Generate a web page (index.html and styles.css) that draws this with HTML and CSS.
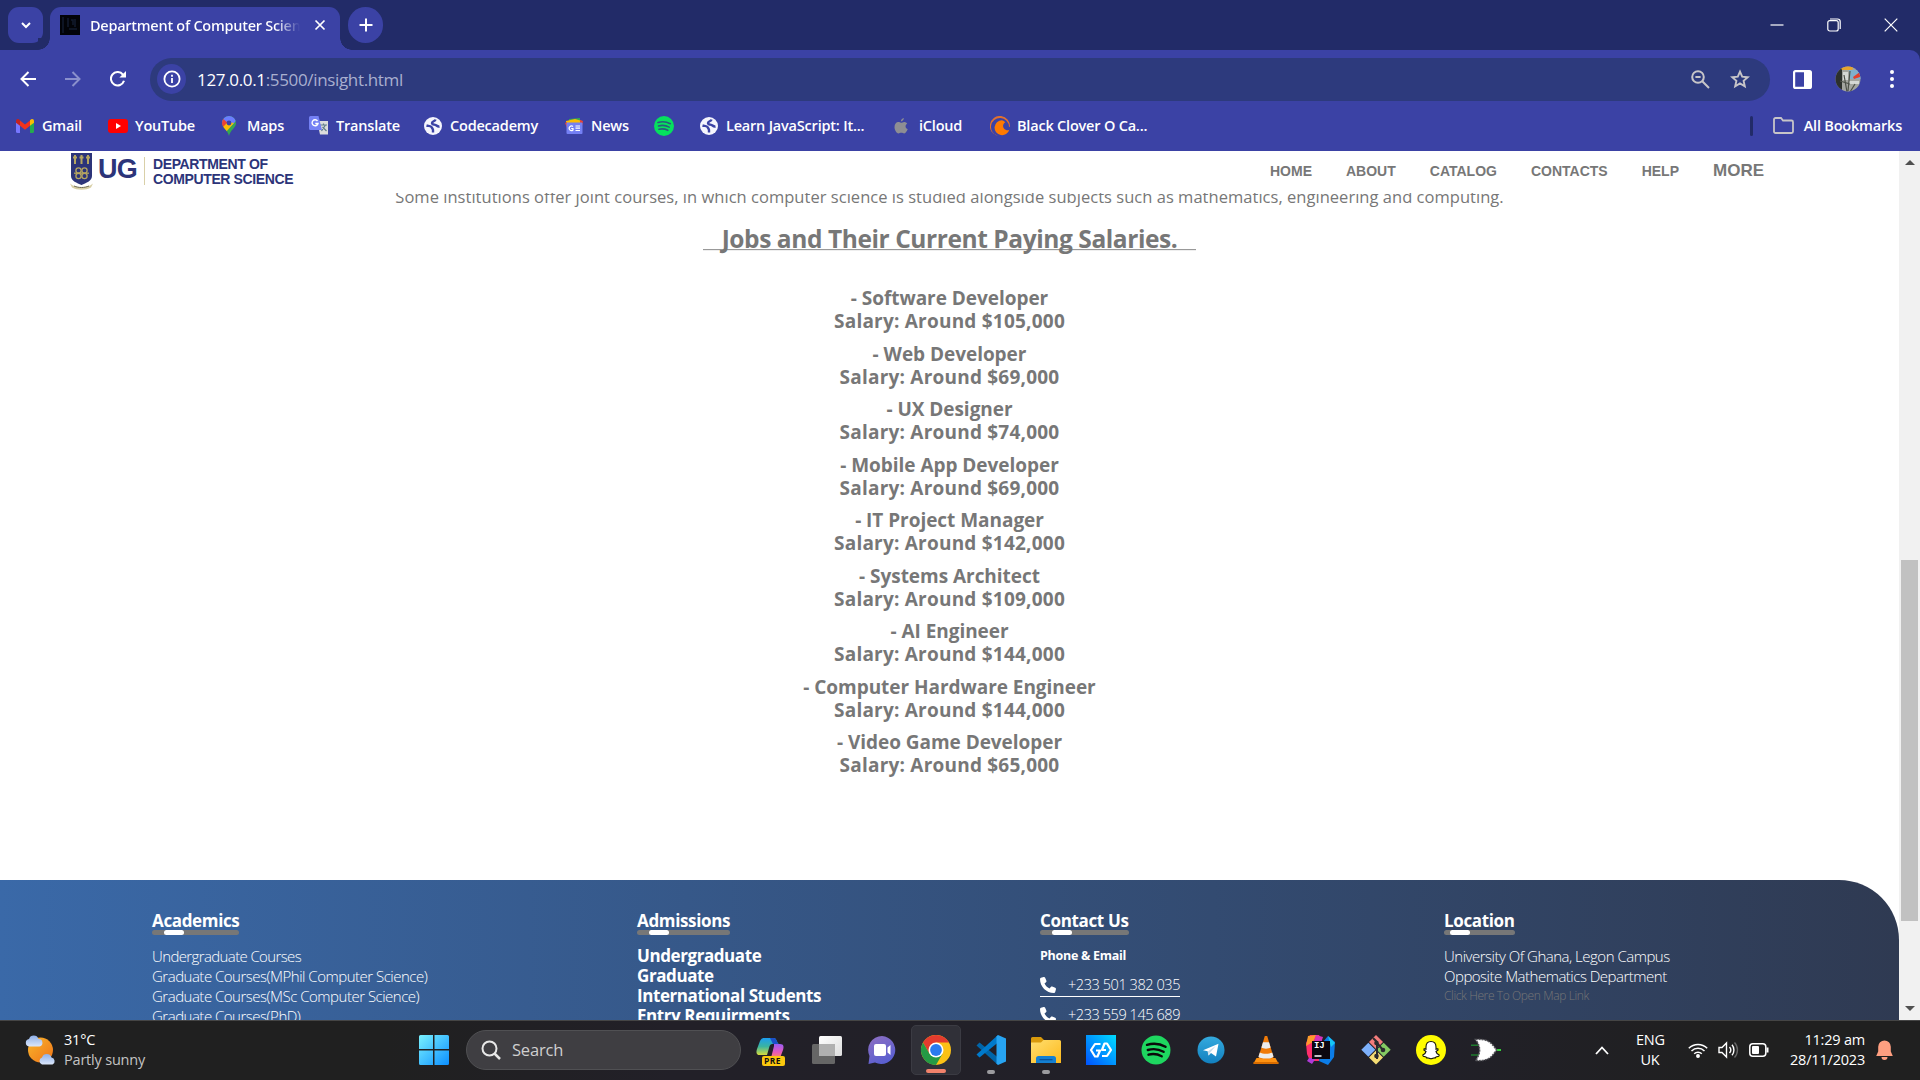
FILE: index.html
```html
<!DOCTYPE html>
<html lang="en">
<head>
<meta charset="utf-8">
<title>Department of Computer Science</title>
<link rel="stylesheet" href="styles.css">
</head>
<body>
<div class="screen">
  <div class="tabstrip">
    <div class="tab-menu"><svg width="12" height="12" viewBox="0 0 12 12"><path d="M2 4l4 4 4-4" fill="none" stroke="#fff" stroke-width="2"/></svg></div>
    <div class="tab">
      <svg class="favicon" width="20" height="20" viewBox="0 0 20 20"><path d="M0 0h20v20H0z" fill="#020308"/><path d="M3 2v16M8 3v9M9 14h8M11 5h2v5M15 4v8" stroke="#121b2e" stroke-width="1.5" fill="none"/></svg>
      <span class="tab-title">Department of Computer Scien</span>
      <svg class="tab-close" width="12" height="12" viewBox="0 0 12 12"><path d="M1.5 1.5l9 9m0-9l-9 9" stroke="#fff" stroke-width="1.7"/></svg>
    </div>
    <div class="tab-new"><svg width="14" height="14" viewBox="0 0 14 14"><path d="M7 .5v13M.5 7h13" stroke="#fff" stroke-width="2"/></svg></div>
    <div class="window-buttons">
      <svg width="14" height="14" viewBox="0 0 14 14"><path d="M.5 7h13" stroke="#fff" stroke-width="1.2"/></svg>
      <svg width="14" height="14" viewBox="0 0 14 14" fill="none" stroke="#fff" stroke-width="1.2"><rect x=".8" y="2.6" width="10.4" height="10.4" rx="2"/><path d="M3 1h7.5a2.7 2.7 0 0 1 2.700 2.700V11"/></svg>
      <svg width="14" height="14" viewBox="0 0 14 14"><path d="M.7.7l12.6 12.6m0-12.6L.7 13.3" stroke="#fff" stroke-width="1.2"/></svg>
    </div>
  </div>

  <div class="toolbar">
    <svg class="nav-icon" width="16" height="16" viewBox="0 0 16 16" fill="none" stroke="#fff" stroke-width="2"><path d="M16 8H2M8.5 1L1.5 8l7 7"/></svg>
    <svg class="nav-icon" width="16" height="16" viewBox="0 0 16 16" fill="none" stroke="#8a90cc" stroke-width="2"><path d="M0 8h14M7.5 1l7 7-7 7"/></svg>
    <svg class="nav-icon" width="16" height="16" viewBox="0 0 16 16"><path d="M14 9.8A6.7 6.7 0 1 1 12.9 3.6L14 5" fill="none" stroke="#fff" stroke-width="2.1"/><path d="M16 0v6.600H9.400z" fill="#fff"/></svg>
    <div class="omnibox">
      <span class="site-info"><svg width="18" height="18" viewBox="0 0 18 18"><circle cx="9" cy="9" r="7.6" fill="none" stroke="#fff" stroke-width="1.8"/><path d="M9 8v5M9 4.8v1.9" stroke="#fff" stroke-width="1.8"/></svg></span>
      <span class="url"><b>127.0.0.1</b>:5500/insight.html</span>
      <svg class="omni-zoom" width="19" height="19" viewBox="0 0 19 19" fill="none" stroke="#c7c5c8" stroke-width="2"><circle cx="7" cy="7" r="5.8"/><path d="M11.3 11.3l6.700 6.700M4.400 7h5.200"/></svg>
      <svg width="20" height="20" viewBox="0 0 20 20" fill="none" stroke="#c7c5c8" stroke-width="1.9"><path d="M10 2.6l2.200 5.100 5.600.5-4.200 3.700 1.200 5.400-4.800-2.900-4.800 2.900 1.200-5.400L2.200 8.200l5.600-.5z"/></svg>
    </div>
    <svg class="side-panel" width="19" height="19" viewBox="0 0 19 19"><rect x="1.1" y="1.1" width="16.8" height="16.8" rx="1.5" fill="none" stroke="#fff" stroke-width="2.2"/><path d="M11 1h7v17h-7z" fill="#fff"/></svg>
    <svg class="avatar" width="26" height="26" viewBox="0 0 26 26"><clipPath id="av"><circle cx="13" cy="13" r="12.5"/></clipPath><g clip-path="url(#av)"><path d="M0 0h26v26H0z" fill="#a3a59f"/><path d="M0 0h7v26H0z" fill="#2c302c"/><path d="M14 4h12v9H14z" fill="#7fb0cc"/><path d="M5 0h14l-2 4H7z" fill="#e6a52e"/><path d="M18 11l7-5v5l-6 2z" fill="#e2402c"/><path d="M8 6h5v8H8zM14 15h10v3H14z" fill="#d5d8d4"/><path d="M9 9l3 17M15 5l-2 20M20 18l-5 8M5 15l10 3" stroke="#4d5148" stroke-width="1.2"/></g></svg>
    <svg class="kebab" width="6" height="20" viewBox="0 0 6 20" fill="#fff"><circle cx="3" cy="3" r="2"/><circle cx="3" cy="10" r="2"/><circle cx="3" cy="17" r="2"/></svg>
  </div>

  <div class="bookmarks">
    <div class="bm"><svg width="20" height="16" viewBox="0 0 20 16"><path d="M1 3v10.500A1.500 1.500 0 0 0 2.500 15H5V6z" fill="#7777ff"/><path d="M19 3v10.500a1.500 1.500 0 0 1-1.500 1.500H15V6z" fill="#25a94f"/><path d="M5 2.500l5 4 5-4v5.300l-5 4-5-4z" fill="#f1321c"/><path d="M1 3.500C1 .6 3.300.5 5 2.200v5.600L1 4.800z" fill="#c5221f"/><path d="M19 3.500C19 .6 16.700.5 15 2.200v5.600l4-3z" fill="#fbbc04"/></svg><span>Gmail</span></div>
    <div class="bm"><svg width="20" height="14" viewBox="0 0 20 14"><rect width="20" height="14" rx="3" fill="#f00"/><path d="M8 4l5 3-5 3z" fill="#fff"/></svg><span>YouTube</span></div>
    <div class="bm maps"><svg width="14" height="20" viewBox="0 0 14 20"><clipPath id="pin"><path d="M7 0a7 7 0 0 1 7 7c0 5-5.500 6.500-7 13C5.500 13.500 0 12 0 7a7 7 0 0 1 7-7z"/></clipPath><g clip-path="url(#pin)"><path d="M0 0h14v20H0z" fill="#34a853"/><path d="M0 0h14v5L7 12 0 8z" fill="#6b7cff"/><path d="M0 2l6 5-6 6z" fill="#ea4335"/><path d="M6 6L0 12l4 4 8-9z" fill="#fbbc04"/></g><circle cx="7" cy="7" r="2.4" fill="#3b42a5"/></svg><span>Maps</span></div>
    <div class="bm"><svg width="20" height="19" viewBox="0 0 20 19"><path d="M8 5h11v13.500H11z" fill="#dcdcdc"/><path d="M11 9h7m-3.500-1.500V9m-2 6l4-6m-3 2l4 4" stroke="#607d8b" stroke-width="1.2" fill="none"/><path d="M1.500 0h8L13 14H1.500A1.500 1.500 0 0 1 0 12.500v-11A1.500 1.500 0 0 1 1.500 0z" fill="#7480f4"/><path d="M8.500 5A3 3 0 1 0 9 7.500H6.300" fill="none" stroke="#fff" stroke-width="1.4"/></svg><span>Translate</span></div>
    <div class="bm globe"><svg width="18" height="18" viewBox="0 0 18 18"><circle cx="9" cy="9" r="9" fill="#f5f5fd"/><path d="M2.500 8.500c2 .6 4.500.3 5.200 1.800.6 1.500 1.300 1.800 1.300 2.700v2.500M11.500 2.500C11 4.500 8 4 8 6s3 1.200 4.500 2.500 3 1 3 1" stroke="#3b42a5" stroke-width="2.4" fill="none"/></svg><span>Codecademy</span></div>
    <div class="bm"><svg width="19" height="16" viewBox="0 0 19 16"><path d="M4 1l11-1v6H4z" fill="#34a853"/><path d="M1 3l9-2 7 2v4H1z" fill="#fbbc04"/><path d="M15 2l3 1-1 5h-2zM0 5l2-1v6z" fill="#ea4335"/><rect x="1.500" y="4.500" width="16" height="11.500" rx="1" fill="#7480f4"/><path d="M8 8.500A2.300 2.300 0 1 0 8 12v-1.500H6.200M10.500 8h4.500M10.500 10.200h4.500M10.500 12.500h4.500" stroke="#fff" stroke-width="1.2" fill="none"/></svg><span>News</span></div>
    <div class="bm"><svg width="20" height="20" viewBox="0 0 20 20"><circle cx="10" cy="10" r="10" fill="#06e05e"/><path d="M4 6.500c4-1.200 8.500-.8 12.300 1.200M4.500 10c3.500-1 7.500-.6 10.700 1.100M5 13.300c3-.7 6.200-.4 8.800 1" stroke="#2a5b7c" stroke-width="1.600" fill="none" stroke-linecap="round"/></svg></div>
    <div class="bm globe"><svg width="18" height="18" viewBox="0 0 18 18"><circle cx="9" cy="9" r="9" fill="#f5f5fd"/><path d="M2.500 8.500c2 .6 4.500.3 5.200 1.800.6 1.500 1.300 1.800 1.300 2.700v2.500M11.500 2.500C11 4.500 8 4 8 6s3 1.200 4.500 2.500 3 1 3 1" stroke="#3b42a5" stroke-width="2.4" fill="none"/></svg><span>Learn JavaScript: It...</span></div>
    <div class="bm apple"><svg width="14" height="16" viewBox="0 0 14 16" fill="#8e8e93"><path d="M7 4.700C8 4.700 9 3.800 10.500 3.900c1.200.1 2.100.6 2.700 1.500-2.400 1.600-2 4.700.5 5.700-.6 1.800-2 4.300-3.500 4.300-1.100 0-1.600-.7-2.900-.7s-1.800.7-2.900.7C2.600 15.400.5 12 .5 9s1.700-5 3.800-5c1.100 0 2 .7 2.700.7zM9.800 0c.1 1.700-1.200 3.300-2.900 3.400C6.800 1.800 8.200.2 9.800 0z"/></svg><span>iCloud</span></div>
    <div class="bm"><svg width="20" height="20" viewBox="0 0 20 20"><path d="M19.800 11A10 10 0 1 0 8 19.800a9 9 0 1 1 11-9z" fill="#f47521" opacity=".9"/><path d="M12 4.200a7.500 7.500 0 1 0 7.300 9.500 3.600 3.600 0 1 1-4-7.400A7 7 0 0 0 12 4.200z" fill="#ff7a00"/></svg><span>Black Clover O Ca...</span></div>
    <div class="all-bm"><i class="bm-sep"></i><svg width="21" height="17" viewBox="0 0 21 17" fill="none" stroke="#c7c5c8" stroke-width="1.8"><path d="M1 14.500V2.500A1.500 1.500 0 0 1 2.500 1H8l2 2.500h8.500A1.500 1.500 0 0 1 20 5v9.500a1.500 1.500 0 0 1-1.500 1.500h-16A1.500 1.500 0 0 1 1 14.500z"/></svg><span>All Bookmarks</span></div>
  </div>

  <div class="viewport">
    <div class="page">
      <header class="site-header">
        <div class="logo">
          <svg width="25" height="38" viewBox="0 0 25 38"><path d="M2 1h21v23c0 5-6 7-10.500 9C8 31 2 29 2 24z" fill="#2c3479"/><path d="M6 3v9M12.500 3v9M19 3v9M4 5.500h4M10.500 5.500h4M17 5.500h4" stroke="#b5a560" stroke-width="2"/><g fill="none" stroke="#b5a560" stroke-width="1.3"><circle cx="9.500" cy="18.500" r="2.600"/><circle cx="15.500" cy="18.500" r="2.600"/><circle cx="9.500" cy="24" r="2.600"/><circle cx="15.500" cy="24" r="2.600"/><path d="M5 21.200h15"/></g><path d="M1 31.500c6 5.500 17 5.500 23 0l-2 4c-5 3-14 3-19 0z" fill="#d8cfa6"/><path d="M5 34c5 2 10 2 15 0" stroke="#6f6a50" fill="none"/></svg>
          <span class="ug">UG</span>
          <span class="dept">DEPARTMENT OF<br>COMPUTER SCIENCE</span>
        </div>
        <nav class="site-nav"><span>HOME</span><span>ABOUT</span><span>CATALOG</span><span>CONTACTS</span><span>HELP</span><span class="more">MORE</span></nav>
      </header>
      <main class="content">
        <p class="intro">Some institutions offer joint courses, in which computer science is studied alongside subjects such as mathematics, engineering and computing.</p>
        <h2>Jobs and Their Current Paying Salaries.</h2>
        <hr>
        <div class="jobs">
          <p>- Software Developer<br><span class="pay">Salary: Around $105,000</span></p>
          <p>- Web Developer<br><span class="pay">Salary: Around $69,000</span></p>
          <p>- UX Designer<br><span class="pay">Salary: Around $74,000</span></p>
          <p>- Mobile App Developer<br><span class="pay">Salary: Around $69,000</span></p>
          <p>- IT Project Manager<br><span class="pay">Salary: Around $142,000</span></p>
          <p>- Systems Architect<br><span class="pay">Salary: Around $109,000</span></p>
          <p>- AI Engineer<br><span class="pay">Salary: Around $144,000</span></p>
          <p>- Computer Hardware Engineer<br><span class="pay">Salary: Around $144,000</span></p>
          <p>- Video Game Developer<br><span class="pay">Salary: Around $65,000</span></p>
        </div>
      </main>
      <footer class="site-footer">
        <section>
          <h3>Academics</h3>
          <ul class="links"><li class="tight">Undergraduate Courses</li><li>Graduate Courses(MPhil Computer Science)</li><li>Graduate Courses(MSc Computer Science)</li><li>Graduate Courses(PhD)</li></ul>
        </section>
        <section>
          <h3>Admissions</h3>
          <ul class="links strong"><li>Undergraduate</li><li>Graduate</li><li>International Students</li><li>Entry Requirments</li></ul>
        </section>
        <section>
          <h3>Contact Us</h3>
          <h4>Phone &amp; Email</h4>
          <div class="phone"><svg width="16" height="16" viewBox="0 0 512 512" fill="#fff"><path d="M164.900 24.600c-7.700-18.600-28-28.500-47.400-23.200l-88 24C12.100 30.200 0 46 0 64c0 247.400 200.600 448 448 448 18 0 33.800-12.100 38.600-29.500l24-88c5.300-19.400-4.600-39.700-23.200-47.400l-96-40c-16.300-6.800-35.200-2.100-46.300 11.600L304.700 368C234.300 334.700 177.300 277.700 144 207.300l49.300-40.300c13.700-11.200 18.400-30 11.600-46.300z"/></svg><span>+233 501 382 035</span></div>
          <div class="phone"><svg width="16" height="16" viewBox="0 0 512 512" fill="#fff"><path d="M164.900 24.600c-7.700-18.600-28-28.500-47.400-23.200l-88 24C12.100 30.200 0 46 0 64c0 247.400 200.600 448 448 448 18 0 33.800-12.100 38.600-29.500l24-88c5.300-19.400-4.600-39.700-23.200-47.400l-96-40c-16.300-6.800-35.200-2.100-46.300 11.600L304.700 368C234.300 334.700 177.300 277.700 144 207.300l49.300-40.300c13.700-11.200 18.400-30 11.600-46.300z"/></svg><span>+233 559 145 689</span></div>
        </section>
        <section class="location">
          <h3>Location</h3>
          <ul class="links"><li>University Of Ghana, Legon Campus</li><li>Opposite Mathematics Department</li><li class="map-link">Click Here To Open Map Link</li></ul>
        </section>
      </footer>
    </div>
    <div class="scrollbar"><i class="arrow up"></i><i class="thumb"></i><i class="arrow down"></i></div>
  </div>

  <div class="taskbar">
    <div class="weather">
      <svg width="32" height="34" viewBox="0 0 32 34"><defs><linearGradient id="sun" x1="0" y1="0" x2="1" y2="1"><stop stop-color="#f8b62c"/><stop offset="1" stop-color="#f07418"/></linearGradient><linearGradient id="cl" x1="0" y1="0" x2="0" y2="1"><stop stop-color="#8fb0e8"/><stop offset="1" stop-color="#dbe7fb"/></linearGradient></defs><circle cx="15.500" cy="17" r="12.500" fill="url(#sun)"/><path d="M4 13.500a3.800 3.800 0 0 1 0-7.500 5 5 0 0 1 9.500 0 3.800 3.800 0 0 1 1 7.500z" fill="url(#cl)"/><path d="M17 31.500a3.700 3.700 0 0 1 0-7 5 5 0 0 1 9.500 0 3.700 3.700 0 0 1 1 7z" fill="url(#cl)"/></svg>
      <div class="weather-text">31°C<br><span class="dim">Partly sunny</span></div>
    </div>
    <svg class="start" width="30" height="30" viewBox="0 0 30 30"><defs><linearGradient id="win" x1="0" y1="0" x2="1" y2="1"><stop stop-color="#7af2fe"/><stop offset="1" stop-color="#0c8fff"/></linearGradient></defs><path d="M1.500 0H14v14H0V1.500A1.500 1.500 0 0 1 1.500 0zM15.500 0h13A1.500 1.500 0 0 1 30 1.500V14H15.500zM0 15.500h14V30H1.500A1.500 1.500 0 0 1 0 28.500zM15.500 15.500H30v13a1.500 1.500 0 0 1-1.500 1.500h-13z" fill="url(#win)"/></svg>
    <div class="search"><svg width="20" height="20" viewBox="0 0 20 20" fill="none" stroke="#e8e8e8" stroke-width="2"><circle cx="8.500" cy="8.500" r="7"/><path d="M13.500 13.500l5.500 5.500" stroke-width="2.500"/></svg><span>Search</span></div>
    <div class="apps">
      <div class="app"><svg width="32" height="32" viewBox="0 0 32 32"><defs><linearGradient id="c1" x1="0" y1="0" x2="0" y2="1"><stop stop-color="#1b9df0"/><stop offset=".5" stop-color="#3bb4a0"/><stop offset="1" stop-color="#d6dc3c"/></linearGradient><linearGradient id="c2" x1="0" y1="0" x2="0" y2="1"><stop stop-color="#9a5cf5"/><stop offset=".6" stop-color="#e85ab8"/><stop offset="1" stop-color="#ff8a5c"/></linearGradient></defs><path d="M9 4h10c3 0 3 6 5 6h-5c-3 0-4 0-5 4l-2 7H5c-4 0-4-3-3-6l3-8c1-2 2-3 4-3z" fill="url(#c1)"/><path d="M15 4h4c3 0 3 6 5 6h-6z" fill="#1b50c8"/><path d="M19 10h6c4 0 4 3 3 6l-3 8h-9l3-12z" fill="url(#c2)"/><rect x="7" y="22" width="23" height="10" rx="2" fill="#fbc80e"/></svg><span class="pre">PRE</span></div>
      <div class="app"><svg width="32" height="32" viewBox="0 0 32 32"><defs><linearGradient id="tv" x1="0" y1="0" x2="1" y2="1"><stop stop-color="#fff"/><stop offset="1" stop-color="#ddd"/></linearGradient></defs><rect x="9" y="2" width="23" height="20" rx="1.500" fill="url(#tv)"/><rect x="2" y="10" width="23" height="20" rx="1.500" fill="#666"/><path d="M9 10h16v12H9z" fill="#b0b0b0"/></svg></div>
      <div class="app"><svg width="32" height="32" viewBox="0 0 32 32"><defs><linearGradient id="mt" x1="0" y1="0" x2=".5" y2="1"><stop stop-color="#8f6fc2"/><stop offset="1" stop-color="#5a5fd0"/></linearGradient></defs><path d="M17 2a14 14 0 1 1-7 26.500L3.500 30 4.500 22A14 14 0 0 1 17 2z" fill="url(#mt)"/><rect x="9" y="10" width="12" height="12" rx="2" fill="#fff"/><path d="M22.500 13.500l3-2.500v10l-3-2.500z" fill="#fff"/></svg></div>
      <div class="app active"><svg width="32" height="32" viewBox="0 0 32 32"><circle cx="16" cy="16" r="15" fill="#fbc116"/><path d="M3 8.500A15 15 0 0 1 29 8.500H16L9.500 19.700z" fill="#e33b2e"/><path d="M3 8.500A15 15 0 0 0 16 31l6.500-11.300L16 22.500 9.500 19.700z" fill="#249a45"/><circle cx="16" cy="16" r="7.500" fill="#fff"/><circle cx="16" cy="16" r="5.900" fill="#2a7bef"/></svg><i class="run"></i></div>
      <div class="app"><svg width="32" height="32" viewBox="0 0 32 32"><path d="M1.500 11.500l3-3L23 23.500V31z" fill="#0065a9"/><path d="M1.500 20.500l3 3L23 8.500V1z" fill="#007acc"/><path d="M23 1l8 3.500v23L23 31l-1.500-1.500V2.500z" fill="#27a4f2"/></svg><i class="run idle"></i></div>
      <div class="app"><svg width="32" height="32" viewBox="0 0 32 32"><defs><linearGradient id="fo" x1="0" y1="0" x2="1" y2="1"><stop stop-color="#ffdf70"/><stop offset="1" stop-color="#fdb91c"/></linearGradient></defs><path d="M1 4.500A1.500 1.500 0 0 1 2.500 3H11l3 3h14v6H1z" fill="#d99a0c"/><path d="M1 8.500h10L13.500 6h16A1.500 1.500 0 0 1 31 7.500V29H1z" fill="url(#fo)"/><path d="M6 24.500A2.500 2.500 0 0 1 8.500 22h15a2.500 2.500 0 0 1 2.500 2.500V29H6z" fill="#1480d2"/><path d="M9.500 25.700h13" stroke="#0a4f96" stroke-width="1.200"/></svg><i class="run idle"></i></div>
      <div class="app"><svg width="32" height="32" viewBox="0 0 32 32"><defs><linearGradient id="gb" x1="0" y1="1" x2="1" y2="0"><stop stop-color="#0052ff"/><stop offset="1" stop-color="#00dcff"/></linearGradient></defs><path d="M1 1h30v30H1z" fill="url(#gb)"/><path d="M15.500 10H10L6 16l4 6.500h2.500L15 16.500h-4M17 22h5l4-6-4-6.500h-2.500L17 16h4" fill="none" stroke="#fff" stroke-width="2.200" stroke-linejoin="round"/></svg></div>
      <div class="app"><svg width="32" height="32" viewBox="0 0 32 32"><circle cx="16" cy="16" r="14.500" fill="#1ed760"/><path d="M7 10.800c6-1.800 13-1.200 18.500 2M7.800 16c5-1.500 11-.9 15.800 1.800M8.500 20.700c4.500-1.200 9-.7 13.200 1.600" stroke="#0a0a0a" stroke-width="2.400" fill="none" stroke-linecap="round"/></svg></div>
      <div class="app"><svg width="32" height="32" viewBox="0 0 32 32"><defs><linearGradient id="tg" x1="0" y1="0" x2="0" y2="1"><stop stop-color="#34aade"/><stop offset="1" stop-color="#1280bf"/></linearGradient></defs><circle cx="16" cy="16" r="13.500" fill="url(#tg)"/><path d="M8 16.200L23.500 9.800 21 22.500l-5-3.500-2.500 2.500-.8-4.200z" fill="#fff"/><path d="M12.700 17.500l8-5.500-5.700 6.700-1.500 2.800z" fill="#c8dcea"/></svg></div>
      <div class="app"><svg width="32" height="32" viewBox="0 0 32 32"><path d="M6.500 24h19l3 5.500h-25z" fill="#ff9210"/><path d="M3.500 28h25v2h-25z" fill="#d96d00"/><path d="M14.800 2h2.400l6.300 21c0 3-15 3-15 0z" fill="#f07a08"/><path d="M13 8.300h6l1.600 5.200c-2 1.500-7.200 1.500-9.200 0zM9.800 18.500c3 1.800 9.400 1.800 12.400 0l1.300 4c-1 2.800-14 2.800-15 0z" fill="#ececec"/></svg></div>
      <div class="app"><svg width="32" height="32" viewBox="0 0 32 32"><path d="M1 9l4-8h9l4 8-4 18H5l-3-7z" fill="#fe2d6b"/><path d="M3 2l8-1-3 7-7 4z" fill="#fc9b2c"/><path d="M18 8l5-6 7 6-1 15-6 8-9-4z" fill="#0c7de8"/><path d="M23 2l7 7-4 4z" fill="#16c7f5"/><path d="M11 1l7 2-2 6H9z" fill="#d533ba"/><path d="M2 27l5 3 4-6H4z" fill="#b03ad8"/><path d="M7 7h18v18H7z" fill="#0b0710"/><path d="M9.500 22h7" stroke="#fff" stroke-width="1.500"/></svg><span class="ij">IJ</span></div>
      <div class="app"><svg width="32" height="32" viewBox="0 0 32 32"><path d="M16 1l7 7-7 7-7-7z" fill="#f47c7c"/><path d="M8.300 8.700l7 7-7 7-7-7z" fill="#7db0fb"/><path d="M23.700 8.700l7 7-7 7-7-7z" fill="#85ca62"/><path d="M16 16.500l7 7-7 7-7-7z" fill="#f5dd74"/><path d="M13 4l4 4v17M17 9l6 7" stroke="#2b2b2e" stroke-width="2" fill="none"/><circle cx="16.500" cy="9" r="2.300" fill="#2b2b2e"/><circle cx="16.500" cy="22" r="2.300" fill="#2b2b2e"/><circle cx="23" cy="16" r="2.300" fill="#2b2b2e"/></svg></div>
      <div class="app"><svg width="32" height="32" viewBox="0 0 32 32"><circle cx="16" cy="16" r="15" fill="#fffc00"/><path d="M16 7.500c3.500 0 5 2.500 5 5.500v2.200l1.800-.5.300 1.300-2.100 1.500c.5 2 1.500 3 3.200 3.500l-.5 1.300-2.700.6-.8 1.100c-1.700-.5-2.500.8-4.200.8s-2.500-1.300-4.200-.8l-.8-1.100-2.700-.6-.5-1.300c1.700-.5 2.700-1.500 3.200-3.500l-2.100-1.500.3-1.300 1.800.5V13c0-3 1.500-5.500 5-5.500z" fill="#fff" stroke="#15150a" stroke-width="1.100"/></svg></div>
      <div class="app"><svg width="32" height="32" viewBox="0 0 32 32"><path d="M1 11.200h9M1 21h9" stroke="#1f7a2e" stroke-width="1.500"/><path d="M25 16h6" stroke="#35d13c" stroke-width="2"/><path d="M5.500 5.500c13-1 16 3.500 21 10.500-5 7-8 11.500-21 10.500 5.500-7 5.500-14 0-21z" fill="#fff" stroke="#55555a" stroke-width="1.500" stroke-dasharray="2 1"/></svg></div>
    </div>
    <div class="tray">
      <svg class="chev" width="14" height="9" viewBox="0 0 14 9"><path d="M1 8l6-6.500L13 8" fill="none" stroke="#fff" stroke-width="1.800"/></svg>
      <div class="lang">ENG<br>UK</div>
      <svg class="wifi" width="20" height="16" viewBox="0 0 20 16" fill="none" stroke="#fff" stroke-width="1.500"><path d="M.8 6.200a13 13 0 0 1 18.400 0M3.500 9a9.200 9.200 0 0 1 13 0M6.200 11.800a5.400 5.400 0 0 1 7.600 0"/><circle cx="10" cy="14" r="1.200" fill="#fff"/></svg>
      <svg class="vol" width="21" height="18" viewBox="0 0 21 18" fill="none" stroke="#fff" stroke-width="1.400"><path d="M1 6.500h3l4.500-4.500v14L4 11.500H1z"/><path d="M11.500 6a4.500 4.500 0 0 1 0 6M14 3.800a8 8 0 0 1 0 10.400"/><path d="M16.500 1.500a11 11 0 0 1 0 15" stroke="#666"/></svg>
      <svg class="batt" width="20" height="14" viewBox="0 0 20 14"><rect x=".8" y=".8" width="16" height="12.400" rx="3" fill="none" stroke="#fff" stroke-width="1.500"/><rect x="3" y="3" width="7" height="8" rx="1" fill="#fff"/><path d="M18.500 4.500v5" stroke="#fff" stroke-width="2"/></svg>
      <div class="clock">11:29 am<br>28/11/2023</div>
      <svg class="bell" width="17" height="20" viewBox="0 0 17 20"><path d="M8.500.500a6.300 6.300 0 0 1 6.300 6.300v4.700l2 4.500H.2l2-4.500V6.800A6.300 6.300 0 0 1 8.500.500zM5.500 17h6a3 3 0 0 1-6 0z" fill="#ff9f80"/></svg>
    </div>
  </div>
</div>
</body>
</html>
```
FILE: styles.css
```css
* { box-sizing: border-box; }
body { margin: 0; font-family: "Open Sans", "Noto Sans", sans-serif; }
svg { display: block; flex: none; }
h2, h3, h4, p, ul { margin: 0; padding: 0; }
.screen { width: 1920px; height: 1080px; display: flex; flex-direction: column; overflow: hidden; background: #fff; }

/* tab strip */
.tabstrip { height: 50px; background: #222b68; display: flex; padding: 7px 22px 0 8px; flex: none; }
.tab-menu { width: 35px; height: 36px; border-radius: 11px; background: #3b42a5; display: grid; place-items: center; }
.tab { position: relative; margin-left: 7px; width: 290px; height: 43px; border-radius: 11px 11px 0 0; background: #3b42a5; display: flex; align-items: center; padding: 0 14px 7px 10px; }
.tab::before, .tab::after { content: ""; position: absolute; bottom: 0; width: 12px; height: 12px; }
.tab::before { right: 100%; background: radial-gradient(circle at 0 0, #222b68 11.5px, #3b42a5 12px); }
.tab::after { left: 100%; background: radial-gradient(circle at 100% 0, #222b68 11.5px, #3b42a5 12px); }
.tab-title { margin: 2px 0 0 10px; width: 210px; overflow: hidden; white-space: nowrap; font-size: 14.5px; font-weight: 600; letter-spacing: -.27px; line-height: 20px; background: linear-gradient(90deg, #fff 185px, #3b42a5 210px); background-clip: text; -webkit-background-clip: text; color: transparent; }
.tab-close { margin-left: auto; }
.tab-new { margin-left: 8px; width: 35px; height: 36px; border-radius: 18px; background: #3b42a5; display: grid; place-items: center; }
.window-buttons { margin-left: auto; display: flex; gap: 43px; align-items: center; height: 35px; }

/* toolbar */
.toolbar { height: 58px; flex: none; background: #3b42a5; display: flex; align-items: center; padding: 0 25px 0 20px; border-radius: 0 10px 0 0; box-shadow: 0 -10px 0 0 #222b68; clip-path: inset(0); }
.nav-icon { margin-right: 29px; }
.omnibox { width: 1620px; height: 43px; margin-left: -5px; border-radius: 22px; background: #2d3a7d; display: flex; align-items: center; padding: 0 20px 0 7px; flex: none; }
.site-info { width: 29px; height: 30px; border-radius: 50%; background: #3b42a5; display: grid; place-items: center; }
.url { margin-left: 11px; font-size: 17px; letter-spacing: -.34px; color: #a9afcf; white-space: nowrap; }
.url b { font-weight: 400; color: #fff; }
.omni-zoom { margin-left: auto; margin-right: 20px; }
.side-panel { margin-left: 23px; }
.avatar { margin-left: 23px; }
.kebab { margin-left: auto; }

/* bookmarks bar */
.bookmarks { height: 43px; flex: none; background: #3b42a5; display: grid; grid-template-columns: 93px 114px 87px 115px 141px 89px 46px 194px 96px 1fr auto; padding: 0 18px 8px 15px; align-items: center; color: #fff; font-size: 14.5px; font-weight: 600; letter-spacing: -.2px; white-space: nowrap; }
.bm { display: flex; align-items: center; gap: 7px; }
.bm.maps { gap: 11px; }
.bm.globe { gap: 8px; }
.bm.apple { gap: 11px; }
.all-bm { display: flex; align-items: center; }
.bm-sep { width: 3px; height: 20px; background: #222b68; margin-right: 20px; border-radius: 2px; }
.all-bm span { margin-left: 10px; }

/* page */
.viewport { flex: 1; display: flex; min-height: 0; }
.page { width: 1899px; display: flex; flex-direction: column; overflow: hidden; }
.site-header { height: 42px; flex: none; display: flex; justify-content: space-between; padding: 0 135px 0 69px; background: #fff; }
.logo { display: flex; font-family: "Liberation Sans", sans-serif; font-weight: 700; color: #2c3479; }
.logo svg { margin-top: 1px; }
.ug { margin-left: 4px; font-size: 27px; letter-spacing: -.8px; line-height: 36px; width: 46px; height: 28px; }
.dept { border-left: 1px solid #d9d0a8; height: 28px; margin-top: 6px; padding-left: 8px; font-size: 14px; letter-spacing: -.38px; line-height: 15px; white-space: nowrap; }
.site-nav { display: flex; gap: 34px; align-items: baseline; padding-top: 10px; font: 700 14px/20px "Liberation Sans", sans-serif; color: #777; }
.site-nav .more { font-size: 17px; }
.content { height: 687px; overflow: hidden; text-align: center; color: #777; flex: none; }
.intro { margin-top: -8px; font-size: 16.5px; letter-spacing: .03px; line-height: 24px; font-weight: 500; white-space: nowrap; }
h2 { margin-top: 13px; font-size: 24.5px; letter-spacing: -.42px; line-height: 34px; font-weight: 700; }
hr { width: 493px; margin: -7px auto 0; border: 0; border-top: 1px solid #999; border-bottom: 1px solid #eee; }
.jobs { margin-top: 36px; font-size: 19px; letter-spacing: -.04px; line-height: 23px; font-weight: 700; }
.jobs p { margin-bottom: 9.5px; }
.pay { letter-spacing: .22px; }

/* footer */
.site-footer { flex: 1; min-height: 0; overflow: hidden; border-radius: 0 60px 0 0; background: linear-gradient(90deg, #3a69a8, #2f3a52); color: #fff; display: grid; grid-template-columns: 485px 403px 404px 1fr; padding: 30px 0 0 152px; align-items: start; }
h3 { position: relative; width: max-content; font-size: 17px; letter-spacing: -.35px; line-height: 22px; font-weight: 700; padding-bottom: 3px; white-space: nowrap; }
h3::before { content: ""; position: absolute; left: 0; bottom: 0; width: 100%; height: 5px; border-radius: 3px; background: #777; }
h3::after { content: ""; position: absolute; left: 12px; bottom: 0; width: 20px; height: 5px; border-radius: 3px; background: #fff; }
.location h3::after { left: 6px; }
.links { list-style: none; margin-top: 11px; font-size: 15px; letter-spacing: -.5px; line-height: 20px; font-weight: 300; white-space: nowrap; }
.links .tight { letter-spacing: -.62px; }
.links.strong { font-size: 17px; letter-spacing: -.42px; font-weight: 700; }
.links .map-link { font-size: 12px; letter-spacing: -.39px; color: #777; }
h4 { margin-top: 11px; font-size: 12.5px; letter-spacing: -.28px; line-height: 20px; font-weight: 700; }
.phone { width: 140px; height: 24px; margin-top: 7px; display: flex; align-items: center; justify-content: space-between; border-bottom: 1px solid #fff; font-size: 14.5px; letter-spacing: -.43px; font-weight: 300; white-space: nowrap; }
.phone + .phone { margin-top: 6px; }

/* scrollbar */
.scrollbar { width: 21px; background: #f1f1f1; display: flex; flex-direction: column; align-items: center; padding: 9px 0; }
.arrow { border: 5px solid transparent; width: 0; height: 0; }
.up { border-bottom-color: #505050; border-top: 0; }
.down { border-top-color: #505050; border-bottom: 0; margin-top: auto; }
.thumb { width: 17px; height: 361px; background: #c1c1c1; margin-top: 395px; }

/* taskbar */
.taskbar { height: 60px; flex: none; border-top: 1px solid #454545; background: linear-gradient(90deg, #202020 0, #202020 20%, #222028 35%, #212028 75%, #202020 90%); display: flex; align-items: center; padding-bottom: 1px; color: #fff; font-size: 14.5px; letter-spacing: -.2px; line-height: 20px; white-space: nowrap; }
.weather { display: flex; align-items: center; width: 419px; padding-left: 25px; }
.weather-text { margin-left: 7px; }
.dim { color: #c4c4c4; }
.search { margin-left: 17px; width: 275px; height: 40px; border-radius: 20px; background: #3f3e42; border: 1px solid #505053; display: flex; align-items: center; padding-left: 14px; font-size: 16.5px; color: #cfcfcf; }
.search span { margin-left: 11px; }
.apps { display: flex; margin-left: 5px; gap: 5px; }
.app { position: relative; width: 50px; height: 50px; display: grid; place-items: center; border-radius: 5px; }
.active { background: #303038; border: 1px solid #3b3b43; }
.run { position: absolute; left: 50%; bottom: 1px; width: 20px; height: 4px; margin-left: -10px; border-radius: 2px; background: #f2826b; }
.idle { width: 8px; margin-left: -4px; background: #9b9b9f; }
.pre { position: absolute; left: 18px; top: 31px; font: 700 8.5px/10px "Open Sans", sans-serif; color: #111; letter-spacing: .4px; }
.ij { position: absolute; left: 18px; top: 16px; font: 700 9px/10px "Liberation Mono", monospace; color: #fff; }
.tray { display: flex; align-items: center; margin-left: auto; padding-right: 27px; }
.lang { margin-left: 27px; width: 28px; text-align: center; }
.wifi { margin-left: 24px; }
.vol { margin-left: 10px; }
.batt { margin-left: 10px; }
.clock { margin-left: 20px; width: 76px; display: flex; flex-direction: column; text-align: right; direction: ltr; }
.clock { display: block; }
.bell { margin-left: 11px; }
```
